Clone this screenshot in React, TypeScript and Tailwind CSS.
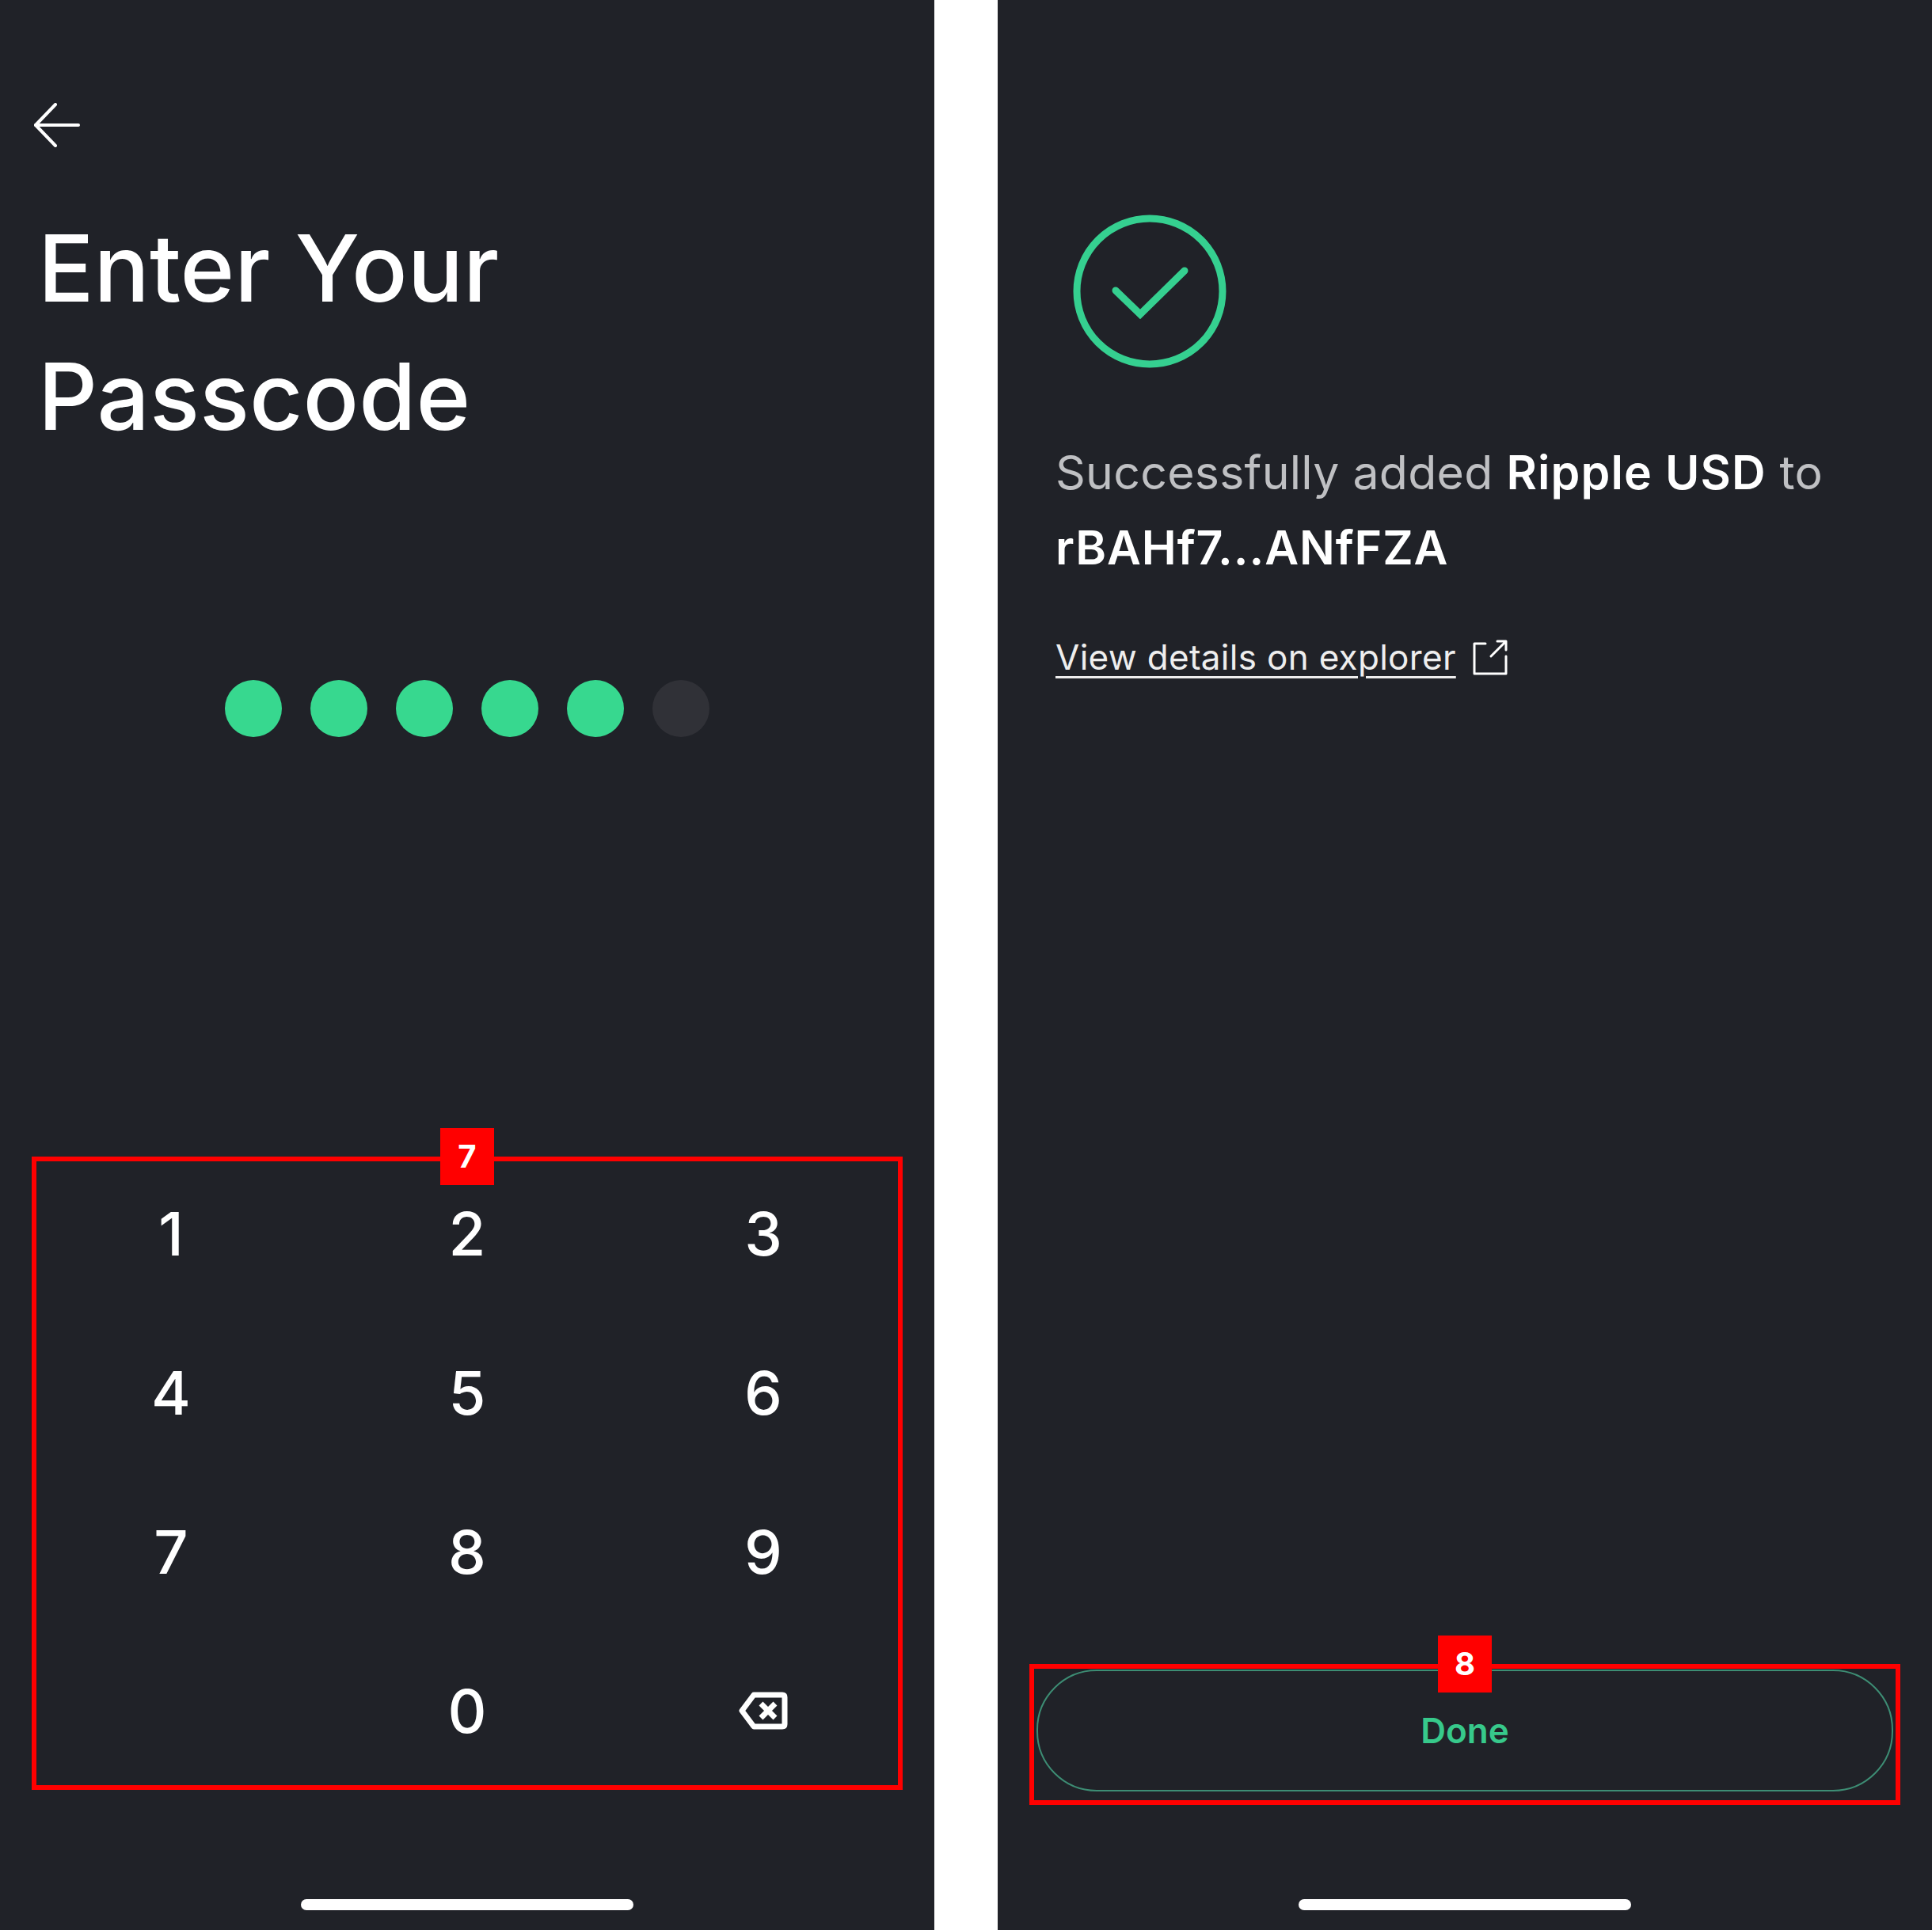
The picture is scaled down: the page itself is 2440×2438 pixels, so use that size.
function BackArrow() {
  return (
    <svg width="60" height="56" viewBox="0 0 60 56" fill="none" stroke="#ffffff" strokeWidth="4" strokeLinecap="round" strokeLinejoin="round">
      <path d="M3 28H57" />
      <path d="M28 2L3 28L28 54" />
    </svg>
  );
}

function Backspace() {
  return (
    <svg width="62" height="48" viewBox="0 0 62 48" fill="none" stroke="#ffffff" strokeWidth="7" strokeLinejoin="round" strokeLinecap="round">
      <path d="M19 4H55C57 4 58 5 58 7V41C58 43 57 44 55 44H19L4 24Z" />
      <path d="M28 15L46 33M46 15L28 33" strokeWidth="7" strokeLinecap="butt" />
    </svg>
  );
}

function CheckCircle() {
  return (
    <svg width="194" height="194" viewBox="0 0 194 194" fill="none" stroke="#35d090" strokeLinecap="round">
      <circle cx="97" cy="97" r="92" strokeWidth="9" />
      <path d="M54 96L85 126L141 71" strokeWidth="9" />
    </svg>
  );
}

function ExternalLink() {
  return (
    <svg width="46" height="46" viewBox="0 0 46 46" fill="none" stroke="#ffffff" strokeWidth="3" strokeLinecap="round" strokeLinejoin="round">
      <path d="M17 6H3V44H43V22" />
      <path d="M24 22L43 3M32 3H43V14" />
    </svg>
  );
}

function HomeBar() {
  return <div className="mx-auto h-[14px] w-[420px] rounded-full bg-white" />;
}

function Badge({ n }: { n: string }) {
  return (
    <div className="absolute -top-[6px] left-1/2 flex h-[72px] w-[68px] -translate-x-1/2 -translate-y-1/2 items-center justify-center bg-[#ff0000] text-[40px] font-bold text-white">
      {n}
    </div>
  );
}

const keys = ["1", "2", "3", "4", "5", "6", "7", "8", "9", "", "0", "x"];

export default function App() {
  return (
    <div className="flex h-[2438px] w-[2440px] overflow-hidden bg-white font-['Inter',sans-serif]">
      <section className="flex h-full w-[1180px] flex-col bg-[#202228] text-white">
        <div className="ml-[42px] mt-[130px]">
          <BackArrow />
        </div>
        <h1 className="ml-[48px] mt-[72px] text-[117px] font-medium leading-[162px]">
          Enter Your
          <br />
          Passcode
        </h1>
        <div className="mt-[277px] flex justify-center gap-[36px]">
          {[0, 1, 2, 3, 4].map((i) => (
            <div key={i} className="h-[72px] w-[72px] rounded-full bg-[#37d88f]" />
          ))}
          <div className="h-[72px] w-[72px] rounded-full bg-[#303137]" />
        </div>
        <div className="relative mt-[526px]">
          <div className="ml-[29px] grid w-[1122px] grid-cols-3">
            {keys.map((k, i) => (
              <div key={i} className="flex h-[201px] items-center justify-center text-[76px] font-medium leading-none">
                {k === "x" ? <Backspace /> : k}
              </div>
            ))}
          </div>
          <div className="pointer-events-none absolute left-[40px] top-[4px] h-[800px] w-[1100px] border-[6px] border-[#ff0000]">
            <Badge n="7" />
          </div>
        </div>
        <div className="mt-auto pb-[25px]">
          <HomeBar />
        </div>
      </section>

      <div className="w-[80px] shrink-0" />

      <section className="flex h-full flex-1 flex-col bg-[#202228] text-white">
        <div className="ml-[95px] mt-[271px]">
          <CheckCircle />
        </div>
        <p className="ml-[73px] mt-[84px] text-[59px] leading-[95px] tracking-[0.25px] text-[#bfc0c3]">
          Successfully added{" "}
          <span className="font-semibold tracking-[1.1px] text-white">Ripple USD</span> to
          <br />
          <span className="font-semibold tracking-[0.9px] text-white">rBAHf7...ANfFZA</span>
        </p>
        <div className="ml-[73px] mt-[60px] flex items-center gap-[20px]">
          <span className="text-[44px] leading-[62px] tracking-[0.3px] text-[#eeeeee] underline decoration-[3px] underline-offset-[8px]">
            View details on explorer
          </span>
          <ExternalLink />
        </div>
        <div className="relative mx-[40px] mt-auto h-[178px] border-[6px] border-[#ff0000]">
          <Badge n="8" />
          <button className="mx-[3px] mt-[1px] flex h-[154px] w-[1082px] items-center justify-center rounded-[76px] border-2 border-[#3d8d74] text-[44px] font-semibold text-[#37c98b]">
            Done
          </button>
        </div>
        <div className="mt-[119px] pb-[25px]">
          <HomeBar />
        </div>
      </section>
    </div>
  );
}
